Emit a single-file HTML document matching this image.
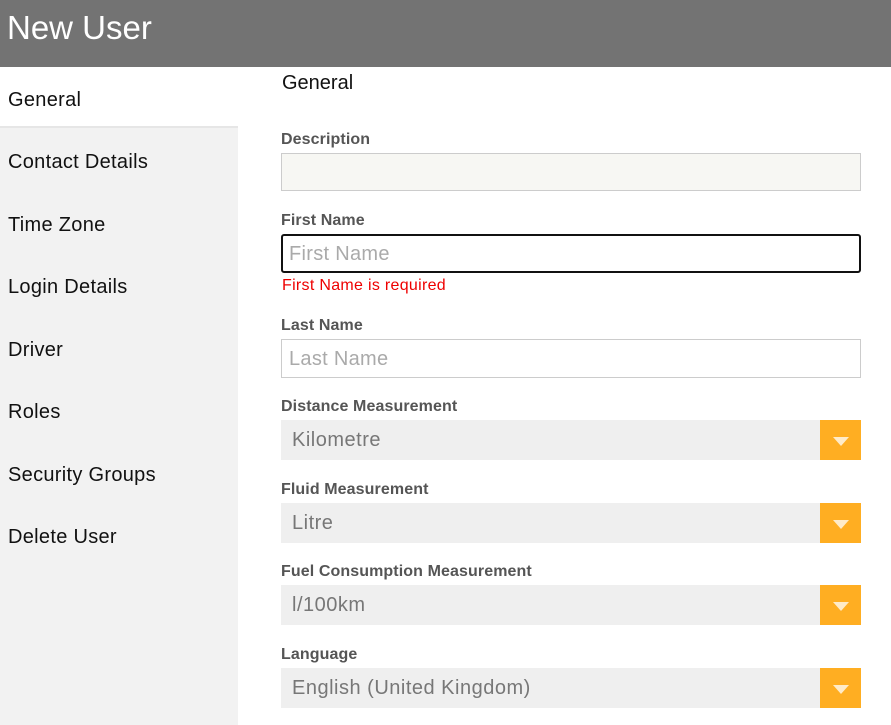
<!DOCTYPE html><html><head><style>
*{margin:0;padding:0;box-sizing:border-box}
body{width:891px;height:725px;overflow:hidden;background:#fff;font-family:"Liberation Sans","DejaVu Sans",sans-serif;position:relative}
.hdr{position:absolute;left:0;top:0;width:891px;height:67px;background:#737373;color:#fff;font-size:33px;padding:9px 0 0 7px}
.side{position:absolute;left:0;top:67px;width:238px;height:658px;background:#f2f2f2}
.it{position:absolute;left:8px;font-size:20px;letter-spacing:.3px;color:#111}
.sel{position:absolute;left:0;top:0;width:238px;height:61px;background:#fff;border-bottom:2px solid #e6e6e6}
.a{position:absolute}
.lbl{position:absolute;left:281px;font-size:16px;font-weight:bold;color:#555;letter-spacing:.1px}
.box{position:absolute;left:281px;width:580px;height:39px;border:1px solid #ccc;font-size:20px;letter-spacing:.3px;color:#aaa;padding:8px 0 0 7px}
.dd{position:absolute;left:281px;width:580px;height:40px;background:#efefef;font-size:20px;letter-spacing:.5px;color:#777;padding:9px 0 0 11px}
.ar{position:absolute;right:0;top:0;width:41px;height:40px;background:#ffae22}
.ar:after{content:"";position:absolute;left:13px;top:17px;border-left:8px solid transparent;border-right:8px solid transparent;border-top:9px solid #ffebc8}
</style></head><body>
<div class="hdr">New User</div>
<div class="side"><div class="sel"></div>
<div class="it" style="top:22px">General</div>
<div class="it" style="top:84px">Contact Details</div>
<div class="it" style="top:147px">Time Zone</div>
<div class="it" style="top:209px">Login Details</div>
<div class="it" style="top:272px">Driver</div>
<div class="it" style="top:334px">Roles</div>
<div class="it" style="top:397px">Security Groups</div>
<div class="it" style="top:459px">Delete User</div>
</div>
<div class="a" style="left:282px;top:72px;font-size:20px;color:#111">General</div>
<div class="lbl" style="top:131px">Description</div>
<div class="box" style="top:153px;height:38px;background:#f7f7f3"></div>
<div class="lbl" style="top:212px">First Name</div>
<div class="box" style="top:234px;border:2px solid #111;border-radius:3px;padding:7px 0 0 6px">First Name</div>
<div class="a" style="left:282px;top:277px;font-size:16px;letter-spacing:.3px;color:#e00">First Name is required</div>
<div class="lbl" style="top:317px">Last Name</div>
<div class="box" style="top:339px">Last Name</div>
<div class="lbl" style="top:398px">Distance Measurement</div>
<div class="dd" style="top:420px">Kilometre<div class="ar"></div></div>
<div class="lbl" style="top:481px">Fluid Measurement</div>
<div class="dd" style="top:503px">Litre<div class="ar"></div></div>
<div class="lbl" style="top:563px">Fuel Consumption Measurement</div>
<div class="dd" style="top:585px">l/100km<div class="ar"></div></div>
<div class="lbl" style="top:646px">Language</div>
<div class="dd" style="top:668px">English (United Kingdom)<div class="ar"></div></div>
</body></html>
